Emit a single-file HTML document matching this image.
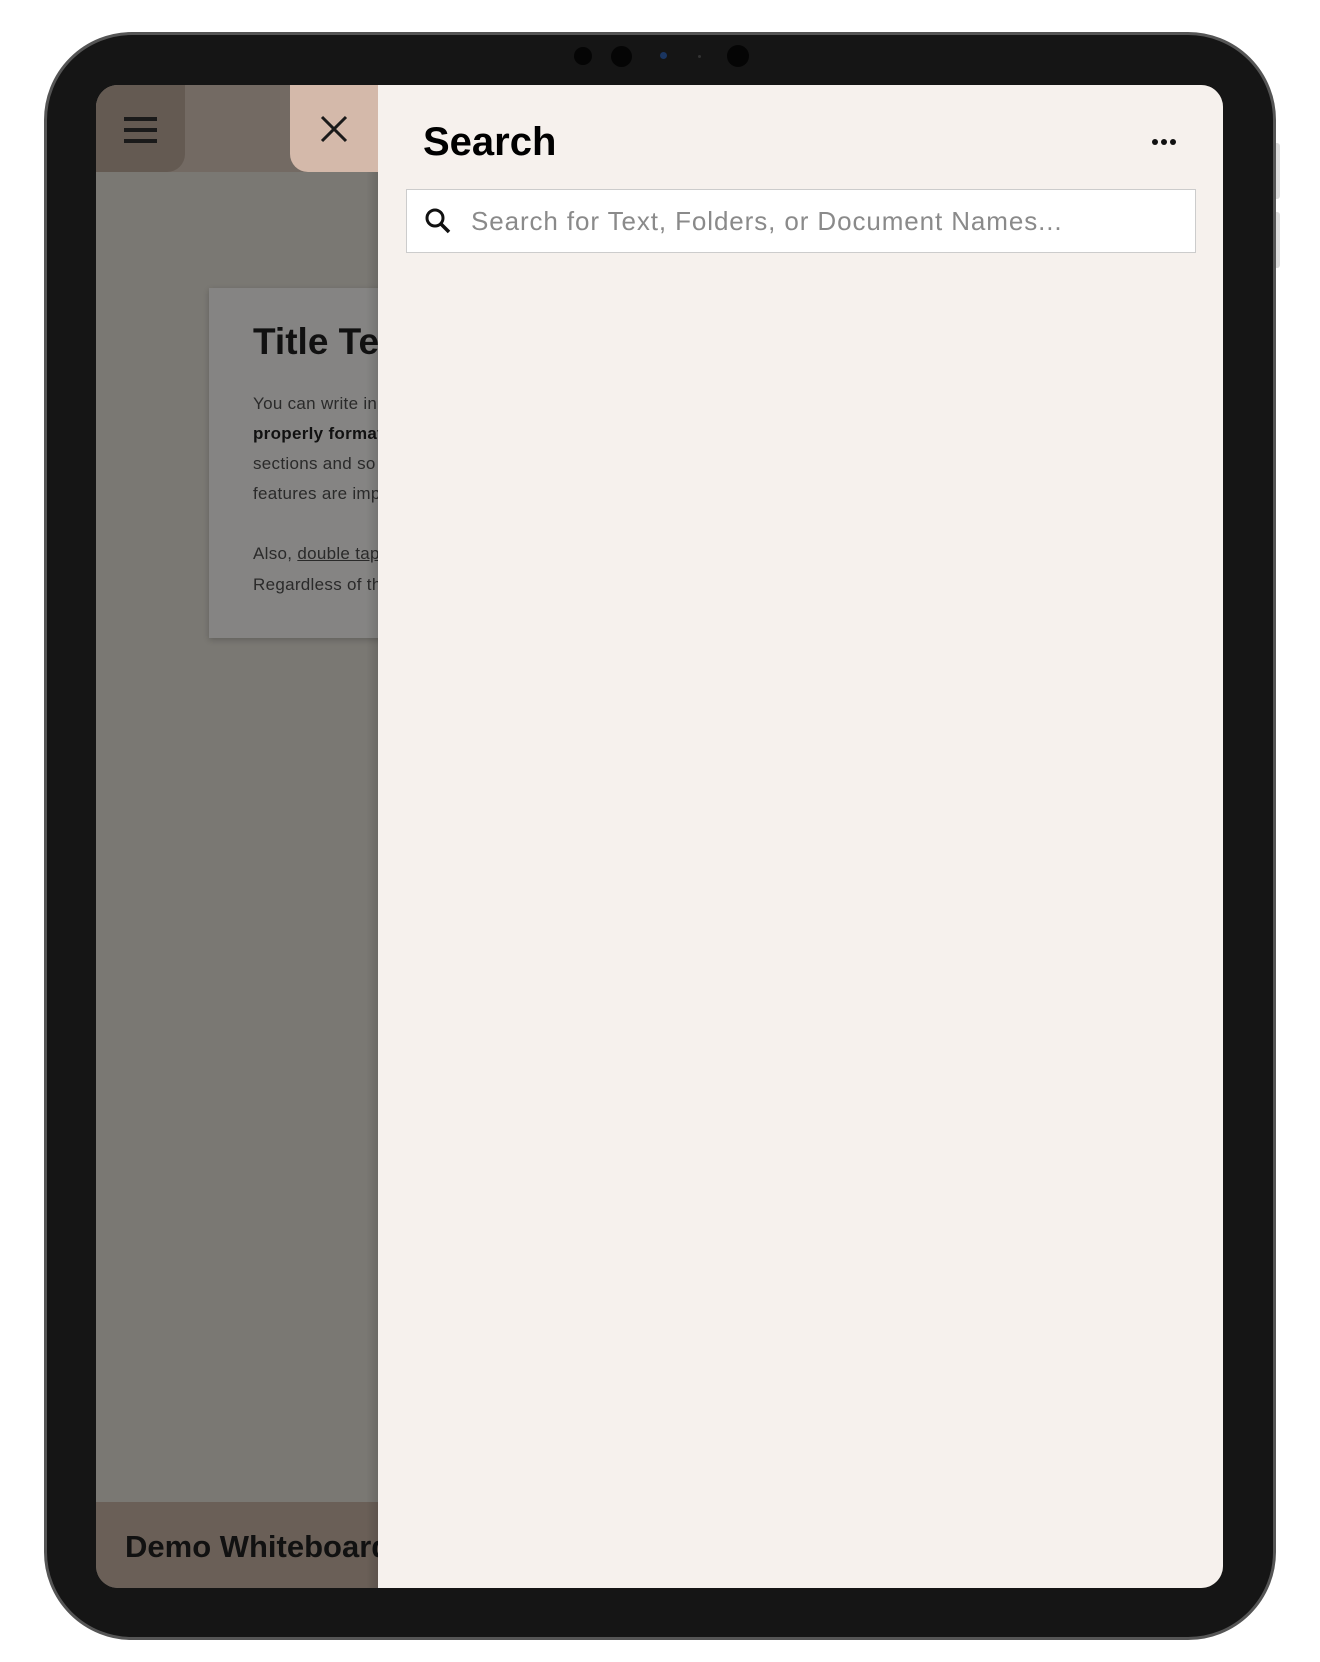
<!DOCTYPE html>
<html><head><meta charset="utf-8"><style>
*{margin:0;padding:0;box-sizing:border-box}
body{width:1320px;height:1662px;background:#fff;position:relative;overflow:hidden;font-family:"Liberation Sans",sans-serif}
.frame{position:absolute;left:44px;top:32px;width:1232px;height:1608px;background:#151515;border-radius:88px;border:3px solid #555}
.btn{position:absolute;left:1274px;width:6px;background:#ddd;border-radius:0 3px 3px 0}
.screen{position:absolute;left:96px;top:85px;width:1127px;height:1503px;border-radius:22px;overflow:hidden;background:#7a7873}
.dot{position:absolute;border-radius:50%;background:#050505}
.card{position:absolute;left:113px;top:203px;width:300px;height:350px;background:#858483;box-shadow:0 2px 6px rgba(0,0,0,.2)}
.txt{position:absolute;left:157px;font-size:17px;color:#2a2a2a;white-space:nowrap;letter-spacing:0.3px}
.panel{position:absolute;left:282px;top:0;width:845px;height:1503px;background:#f6f1ed}
</style></head><body>
<div class="btn" style="top:143px;height:56px"></div>
<div class="btn" style="top:212px;height:56px"></div>
<div class="frame"></div>
<div class="dot" style="left:574px;top:47px;width:18px;height:18px"></div>
<div class="dot" style="left:611px;top:46px;width:21px;height:21px"></div>
<div class="dot" style="left:660px;top:52px;width:7px;height:7px;background:#1a3560"></div>
<div class="dot" style="left:698px;top:55px;width:3px;height:3px;background:#333"></div>
<div class="dot" style="left:727px;top:45px;width:22px;height:22px"></div>
<div class="screen">
  <div style="position:absolute;left:0;top:0;width:282px;height:87px;background:#736a63"></div>
  <div style="position:absolute;left:0;top:0;width:89px;height:87px;background:#645a52;border-radius:0 0 18px 0"></div>
  <div style="position:absolute;left:28px;top:32px;width:33px;height:4px;background:#1a1a1a;box-shadow:0 11px 0 #1a1a1a,0 22px 0 #1a1a1a"></div>
  <div style="position:absolute;left:194px;top:0;width:100px;height:87px;background:#d4b9aa;border-radius:0 0 0 18px"></div>
  <div style="position:absolute;left:283px;top:0;width:20px;height:87px;background:#d4b9aa"></div>
  <svg style="position:absolute;left:223px;top:29px" width="30" height="30" viewBox="0 0 30 30"><path d="M3 3L27 27M27 3L3 27" stroke="#1a1a1a" stroke-width="3"/></svg>
  <div class="card"></div>
  <div class="txt" style="top:236px;font-size:37px;font-weight:bold;color:#111;letter-spacing:0">Title Text</div>
  <div class="txt" style="top:309px">You can write in</div>
  <div class="txt" style="top:339px;font-weight:bold;color:#111">properly format</div>
  <div class="txt" style="top:369px">sections and so</div>
  <div class="txt" style="top:399px">features are imp</div>
  <div class="txt" style="top:459px">Also, <span style="text-decoration:underline">double tap</span></div>
  <div class="txt" style="top:490px">Regardless of th</div>
  <div style="position:absolute;left:0;top:1417px;width:282px;height:86px;background:#6a5f57"></div>
  <div style="position:absolute;left:29px;top:1444px;font-size:31px;font-weight:bold;color:#111;white-space:nowrap">Demo Whiteboard</div>
  <div class="panel">
    <div style="position:absolute;left:45px;top:35px;font-size:40px;font-weight:bold;color:#000">Search</div>
    <div style="position:absolute;left:774px;top:54px;width:6px;height:6px;border-radius:50%;background:#111;box-shadow:9px 0 0 #111,18px 0 0 #111"></div>
    <div style="position:absolute;left:28px;top:104px;width:790px;height:64px;background:#fff;border:1px solid #ccc"></div>
    <svg style="position:absolute;left:46px;top:122px" width="28" height="28" viewBox="0 0 28 28"><circle cx="11" cy="11" r="8" fill="none" stroke="#111" stroke-width="3"/><path d="M17 17L25 25" stroke="#111" stroke-width="3.5"/></svg>
    <div style="position:absolute;left:93px;top:121px;font-size:26px;color:#8a8a8a;white-space:nowrap;letter-spacing:0.9px">Search for Text, Folders, or Document Names...</div>
  </div>
  <div style="position:absolute;left:270px;top:87px;width:12px;height:1416px;background:linear-gradient(90deg,rgba(0,0,0,0),rgba(0,0,0,.12))"></div>
</div>
</body></html>
